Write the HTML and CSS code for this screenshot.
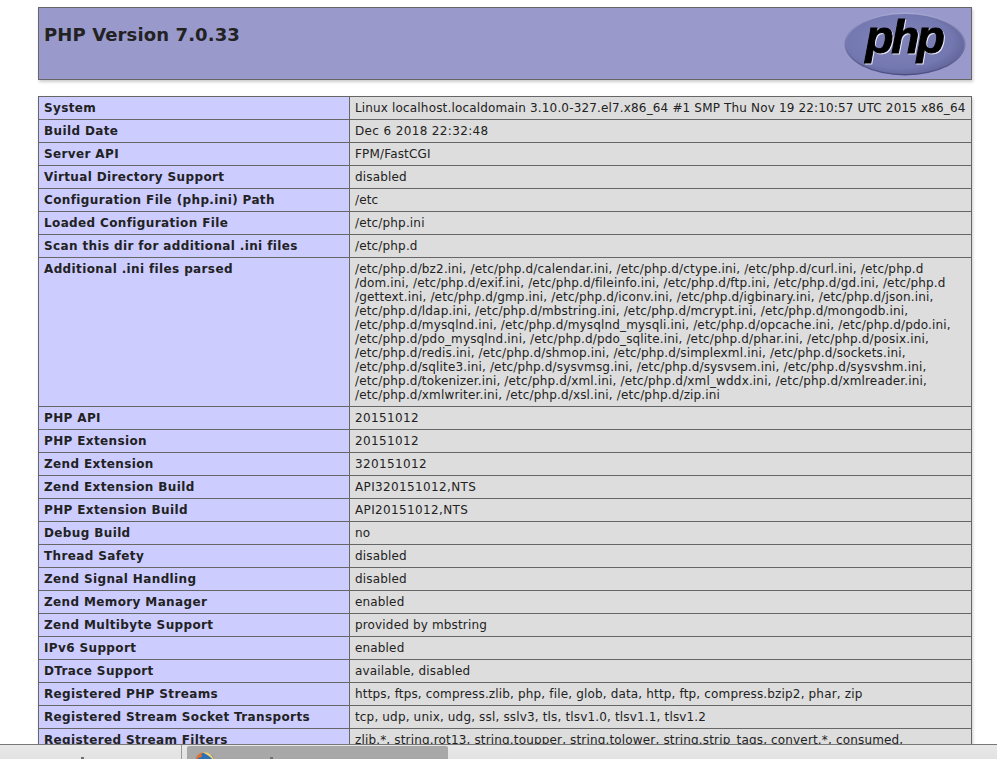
FILE: index.html
```html
<!DOCTYPE html>
<html lang="en">
<head>
<meta charset="utf-8">
<title>phpinfo()</title>
<link rel="stylesheet" href="styles.css">
</head>
<body>
<div class="page">
<table class="info head-table">
<tr class="h"><td>
<div class="head-inner">
<h1 class="p">PHP Version 7.0.33</h1>
<svg class="logo" width="122" height="64" viewBox="0 0 122 64" role="img" aria-label="PHP logo">
<defs>
<radialGradient id="oval" cx="0.45" cy="0.45" r="0.6">
<stop offset="0" stop-color="#8084ba"/>
<stop offset="0.75" stop-color="#7478b0"/>
<stop offset="1" stop-color="#5f6399"/>
</radialGradient>
<linearGradient id="rim" x1="0" y1="0" x2="0" y2="1">
<stop offset="0" stop-color="#a4a7d2"/>
<stop offset="1" stop-color="#4a4d80"/>
</linearGradient>
</defs>
<ellipse cx="61" cy="32" rx="60.5" ry="31.5" fill="url(#rim)"/>
<ellipse cx="61" cy="32" rx="59" ry="30" fill="url(#oval)"/>
<text class="logo-text" x="60" y="41" text-anchor="middle">php</text>
</svg>
</div>
</td></tr>
</table>
<table class="info">
<tr><td class="e">System</td><td class="v">Linux localhost.localdomain 3.10.0-327.el7.x86_64 #1 SMP Thu Nov 19 22:10:57 UTC 2015 x86_64</td></tr>
<tr><td class="e">Build Date</td><td class="v num">Dec 6 2018 22:32:48</td></tr>
<tr><td class="e">Server API</td><td class="v">FPM/FastCGI</td></tr>
<tr><td class="e">Virtual Directory Support</td><td class="v">disabled</td></tr>
<tr><td class="e">Configuration File (php.ini) Path</td><td class="v">/etc</td></tr>
<tr><td class="e">Loaded Configuration File</td><td class="v">/etc/php.ini</td></tr>
<tr><td class="e">Scan this dir for additional .ini files</td><td class="v">/etc/php.d</td></tr>
<tr><td class="e">Additional .ini files parsed</td><td class="v">/etc/php.d/bz2.ini, /etc/php.d/calendar.ini, /etc/php.d/ctype.ini, /etc/php.d/curl.ini, /etc/php.d<br>/dom.ini, /etc/php.d/exif.ini, /etc/php.d/fileinfo.ini, /etc/php.d/ftp.ini, /etc/php.d/gd.ini, /etc/php.d<br>/gettext.ini, /etc/php.d/gmp.ini, /etc/php.d/iconv.ini, /etc/php.d/igbinary.ini, /etc/php.d/json.ini,<br>/etc/php.d/ldap.ini, /etc/php.d/mbstring.ini, /etc/php.d/mcrypt.ini, /etc/php.d/mongodb.ini,<br>/etc/php.d/mysqlnd.ini, /etc/php.d/mysqlnd_mysqli.ini, /etc/php.d/opcache.ini, /etc/php.d/pdo.ini,<br>/etc/php.d/pdo_mysqlnd.ini, /etc/php.d/pdo_sqlite.ini, /etc/php.d/phar.ini, /etc/php.d/posix.ini,<br>/etc/php.d/redis.ini, /etc/php.d/shmop.ini, /etc/php.d/simplexml.ini, /etc/php.d/sockets.ini,<br>/etc/php.d/sqlite3.ini, /etc/php.d/sysvmsg.ini, /etc/php.d/sysvsem.ini, /etc/php.d/sysvshm.ini,<br>/etc/php.d/tokenizer.ini, /etc/php.d/xml.ini, /etc/php.d/xml_wddx.ini, /etc/php.d/xmlreader.ini,<br>/etc/php.d/xmlwriter.ini, /etc/php.d/xsl.ini, /etc/php.d/zip.ini</td></tr>
<tr><td class="e">PHP API</td><td class="v num">20151012</td></tr>
<tr><td class="e">PHP Extension</td><td class="v num">20151012</td></tr>
<tr><td class="e">Zend Extension</td><td class="v num">320151012</td></tr>
<tr><td class="e">Zend Extension Build</td><td class="v num">API320151012,NTS</td></tr>
<tr><td class="e">PHP Extension Build</td><td class="v num">API20151012,NTS</td></tr>
<tr><td class="e">Debug Build</td><td class="v">no</td></tr>
<tr><td class="e">Thread Safety</td><td class="v">disabled</td></tr>
<tr><td class="e">Zend Signal Handling</td><td class="v">disabled</td></tr>
<tr><td class="e">Zend Memory Manager</td><td class="v">enabled</td></tr>
<tr><td class="e">Zend Multibyte Support</td><td class="v">provided by mbstring</td></tr>
<tr><td class="e">IPv6 Support</td><td class="v">enabled</td></tr>
<tr><td class="e">DTrace Support</td><td class="v">available, disabled</td></tr>
<tr><td class="e">Registered PHP Streams</td><td class="v">https, ftps, compress.zlib, php, file, glob, data, http, ftp, compress.bzip2, phar, zip</td></tr>
<tr><td class="e">Registered Stream Socket Transports</td><td class="v">tcp, udp, unix, udg, ssl, sslv3, tls, tlsv1.0, tlsv1.1, tlsv1.2</td></tr>
<tr><td class="e">Registered Stream Filters</td><td class="v">zlib.*, string.rot13, string.toupper, string.tolower, string.strip_tags, convert.*, consumed,</td></tr>
</table>
</div>
<div class="taskbar">
<div class="task first"><span class="clipped-a"></span></div>
<div class="task active">
<svg class="fox" width="20" height="20" viewBox="0 0 20 20" aria-hidden="true">
<circle cx="10" cy="10" r="9.5" fill="#2f6fb5"/>
<path d="M0.5 10 C0.5 4 4 1 8 0.5 C6.5 2 6 3.5 7 5 C4 5 2 7 0.5 10Z" fill="#e0702a"/>
<path d="M8 0.5 C13 -0.5 18 3 19.5 9 L15 5 C13 3 10 2 8 0.5Z" fill="#f0d070"/>
</svg>
<span class="clipped-b"></span>
</div>
</div>
</body>
</html>
```
FILE: styles.css
```css
html, body {
  margin: 0;
  height: 759px;
  overflow: hidden;
  background: #fff;
}
body {
  color: #222;
  font-family: "DejaVu Sans", sans-serif;
}
.page {
  width: 934px;
  margin-left: 38px;
  padding-top: 7px;
}
.info {
  width: 934px;
  border-collapse: collapse;
  table-layout: fixed;
  box-shadow: 1px 2px 3px #ccc;
  margin-bottom: 16px;
}
.info td {
  border: 1px solid #666;
  font-size: 12px;
  line-height: 14px;
  letter-spacing: 0.16px;
  vertical-align: baseline;
  padding: 4px 5px;
}
.h td {
  background: #99c;
  height: 59px;
  box-sizing: content-box;
  vertical-align: top;
}
.head-inner {
  display: flex;
  justify-content: space-between;
  align-items: flex-start;
  height: 63px;
}
.p {
  margin: 12px 0 0;
  font-size: 18px;
  line-height: 21px;
  font-weight: bold;
  letter-spacing: 0.12px;
}
.logo {
  display: block;
  flex: none;
}
.logo-text {
  font-family: "Liberation Sans", sans-serif;
  font-size: 46px;
  font-weight: bold;
  font-style: italic;
  letter-spacing: -2.5px;
  fill: #000;
  stroke: #000;
  stroke-width: 1px;
  filter: drop-shadow(1px 1px 0 #e8e8f4);
}
.info td.e {
  width: 300px;
  background: #ccf;
  font-weight: bold;
  letter-spacing: 0.37px;
}
.v {
  background: #ddd;
  overflow: hidden;
  white-space: nowrap;
}
.info td.num {
  letter-spacing: 0.36px;
}
.taskbar {
  position: fixed;
  left: 0;
  right: 0;
  bottom: 0;
  height: 15px;
  display: flex;
  background: linear-gradient(#e8e8e8, #e2e2e2);
  border-top: 1px solid #777;
  box-sizing: border-box;
  overflow: hidden;
}
.task.first {
  width: 181px;
  border-right: 1px solid #999;
  position: relative;
}
.task.active {
  width: 261px;
  margin: 1px 0 0 5px;
  background: #a8a8a8;
  border-radius: 2px 2px 0 0;
  position: relative;
}
.fox {
  position: absolute;
  left: 8px;
  top: 6px;
}
.clipped-a, .clipped-b {
  position: absolute;
  width: 3px;
  height: 3px;
  background: #707070;
}
.clipped-a {
  left: 81px;
  top: 12px;
}
.clipped-b {
  left: 83px;
  top: 11px;
}
```
